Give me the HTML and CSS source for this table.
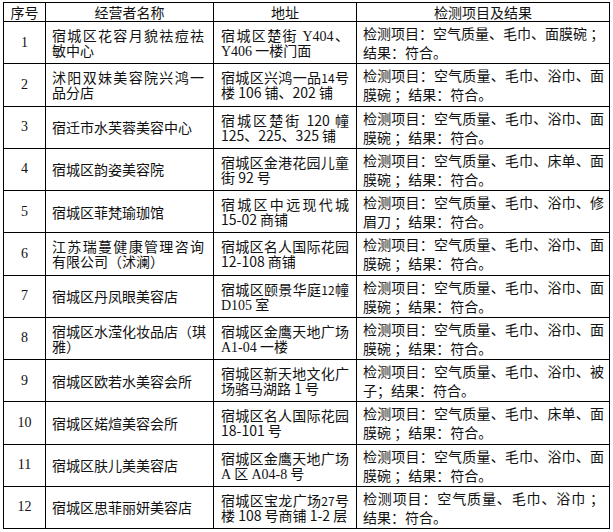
FILE: index.html
```html
<!DOCTYPE html>
<html lang="zh-CN">
<head>
<meta charset="utf-8">
<title>检测结果</title>
<link rel="stylesheet" href="styles.css">
</head>
<body>
<table class="tbl">
  <colgroup>
    <col class="c-no"><col class="c-name"><col class="c-addr"><col class="c-res">
  </colgroup>
  <thead>
    <tr class="hd"><th>序号</th><th>经营者名称</th><th>地址</th><th>检测项目及结果</th></tr>
  </thead>
  <tbody>
    <tr>
      <td class="no">1</td>
      <td class="name"><span class="l1">宿城区花容月貌祛痘祛</span><span class="l2">敏中心</span></td>
      <td class="addr"><span class="l1">宿城区楚街 <span class="ser">Y404</span>、</span><span class="l2"><span class="ser">Y406</span> 一楼门面</span></td>
      <td class="res"><span class="l1">检测项目：空气质量、毛巾、面膜碗 ；</span><span class="l2">结果：符合。</span></td>
    </tr>
    <tr>
      <td class="no">2</td>
      <td class="name"><span class="l1">沭阳双妹美容院兴鸿一</span><span class="l2">品分店</span></td>
      <td class="addr"><span class="l1">宿城区兴鸿一品<span class="sm">14</span>号</span><span class="l2">楼 106 铺、202 铺</span></td>
      <td class="res"><span class="l1">检测项目：空气质量、毛巾、浴巾、面</span><span class="l2">膜碗 ；结果：符合。</span></td>
    </tr>
    <tr>
      <td class="no">3</td>
      <td class="name">宿迁市水芙蓉美容中心</td>
      <td class="addr"><span class="l1">宿城区楚街 120 幢</span><span class="l2">125、225、325 铺</span></td>
      <td class="res"><span class="l1">检测项目：空气质量、毛巾、浴巾、面</span><span class="l2">膜碗 ；结果：符合。</span></td>
    </tr>
    <tr>
      <td class="no">4</td>
      <td class="name">宿城区韵姿美容院</td>
      <td class="addr"><span class="l1">宿城区金港花园儿童</span><span class="l2">街 92 号</span></td>
      <td class="res"><span class="l1">检测项目：空气质量、毛巾、床单、面</span><span class="l2">膜碗 ；结果：符合。</span></td>
    </tr>
    <tr>
      <td class="no">5</td>
      <td class="name">宿城区菲梵瑜珈馆</td>
      <td class="addr"><span class="l1">宿城区中远现代城</span><span class="l2">15-02 商铺</span></td>
      <td class="res"><span class="l1">检测项目：空气质量、毛巾、浴巾、修</span><span class="l2">眉刀 ；结果：符合。</span></td>
    </tr>
    <tr>
      <td class="no">6</td>
      <td class="name"><span class="l1">江苏瑞蔓健康管理咨询</span><span class="l2">有限公司（沭澜）</span></td>
      <td class="addr"><span class="l1">宿城区名人国际花园</span><span class="l2">12-108 商铺</span></td>
      <td class="res"><span class="l1">检测项目：空气质量、毛巾、浴巾、面</span><span class="l2">膜碗 ；结果：符合。</span></td>
    </tr>
    <tr>
      <td class="no">7</td>
      <td class="name">宿城区丹凤眼美容店</td>
      <td class="addr"><span class="l1">宿城区颐景华庭<span class="sm">12</span>幢</span><span class="l2"><span class="ser">D105</span> 室</span></td>
      <td class="res"><span class="l1">检测项目：空气质量、毛巾、浴巾、面</span><span class="l2">膜碗 ；结果：符合。</span></td>
    </tr>
    <tr>
      <td class="no">8</td>
      <td class="name"><span class="l1">宿城区水滢化妆品店（琪</span><span class="l2">雅）</span></td>
      <td class="addr"><span class="l1">宿城区金鹰天地广场</span><span class="l2"><span class="ser">A1-04</span> 一楼</span></td>
      <td class="res"><span class="l1">检测项目：空气质量、毛巾、浴巾、面</span><span class="l2">膜碗 ；结果：符合。</span></td>
    </tr>
    <tr>
      <td class="no">9</td>
      <td class="name">宿城区欧若水美容会所</td>
      <td class="addr"><span class="l1">宿城区新天地文化广</span><span class="l2">场骆马湖路 1 号</span></td>
      <td class="res"><span class="l1">检测项目：空气质量、毛巾、浴巾、被</span><span class="l2">子；结果：符合。</span></td>
    </tr>
    <tr>
      <td class="no">10</td>
      <td class="name">宿城区婼煊美容会所</td>
      <td class="addr"><span class="l1">宿城区名人国际花园</span><span class="l2">18-101 号</span></td>
      <td class="res"><span class="l1">检测项目：空气质量、毛巾、床单、面</span><span class="l2">膜碗 ；结果：符合。</span></td>
    </tr>
    <tr>
      <td class="no">11</td>
      <td class="name">宿城区肤儿美美容店</td>
      <td class="addr"><span class="l1">宿城区金鹰天地广场</span><span class="l2"><span class="ser">A</span> 区 <span class="ser">A04-8</span> 号</span></td>
      <td class="res"><span class="l1">检测项目：空气质量、毛巾、浴巾、面</span><span class="l2">膜碗 ；结果：符合。</span></td>
    </tr>
    <tr>
      <td class="no">12</td>
      <td class="name">宿城区思菲丽妍美容店</td>
      <td class="addr"><span class="l1">宿城区宝龙广场<span class="sm">27</span>号</span><span class="l2">楼 108 号商铺 1-2 层</span></td>
      <td class="res"><span class="l1">检测项目：空气质量、毛巾、浴巾 ；</span><span class="l2">结果：符合。</span></td>
    </tr>
  </tbody>
</table>
</body>
</html>
```

FILE: styles.css
```css
html, body {
  margin: 0;
  padding: 0;
  background: #ffffff;
}

body {
  font-family: "Noto Sans CJK SC", "Noto Sans", sans-serif;
  font-size: 14px;
  color: #111111;
}

.tbl {
  margin: 2px 0 0 3px;
  border-collapse: collapse;
  table-layout: fixed;
  width: 606px;
}

.c-no { width: 42px; }
.c-name { width: 168px; }
.c-addr { width: 143px; }
.c-res { width: 253px; }

.tbl th,
.tbl td {
  border: 1px solid #000000;
  vertical-align: middle;
  padding: 0;
  overflow: hidden;
}

.hd {
  height: 19px;
}

.tbl th {
  font-weight: normal;
  line-height: 16px;
  text-align: center;
}

.tbl tbody tr {
  height: 42.25px;
}

.no {
  text-align: center;
  font-family: "Liberation Serif", serif;
  font-size: 14px;
  line-height: 16px;
}

.tbl .name {
  padding: 1px 9px 0 6px;
  line-height: 15px;
}

.tbl .addr {
  padding: 1px 7px 0 7px;
  line-height: 15px;
}

.tbl .res {
  padding: 1px 5px 0 6px;
  line-height: 19px;
}

.l1 {
  display: block;
  height: 15px;
  text-align: justify;
  text-align-last: justify;
  white-space: nowrap;
}

.res .l1,
.res .l2 {
  height: 19px;
}

.l2 {
  display: block;
  height: 15px;
  white-space: nowrap;
}

.ser {
  font-family: "Liberation Serif", serif;
  line-height: 1;
}

.sm {
  font-size: 12px;
  line-height: 1;
}
```
